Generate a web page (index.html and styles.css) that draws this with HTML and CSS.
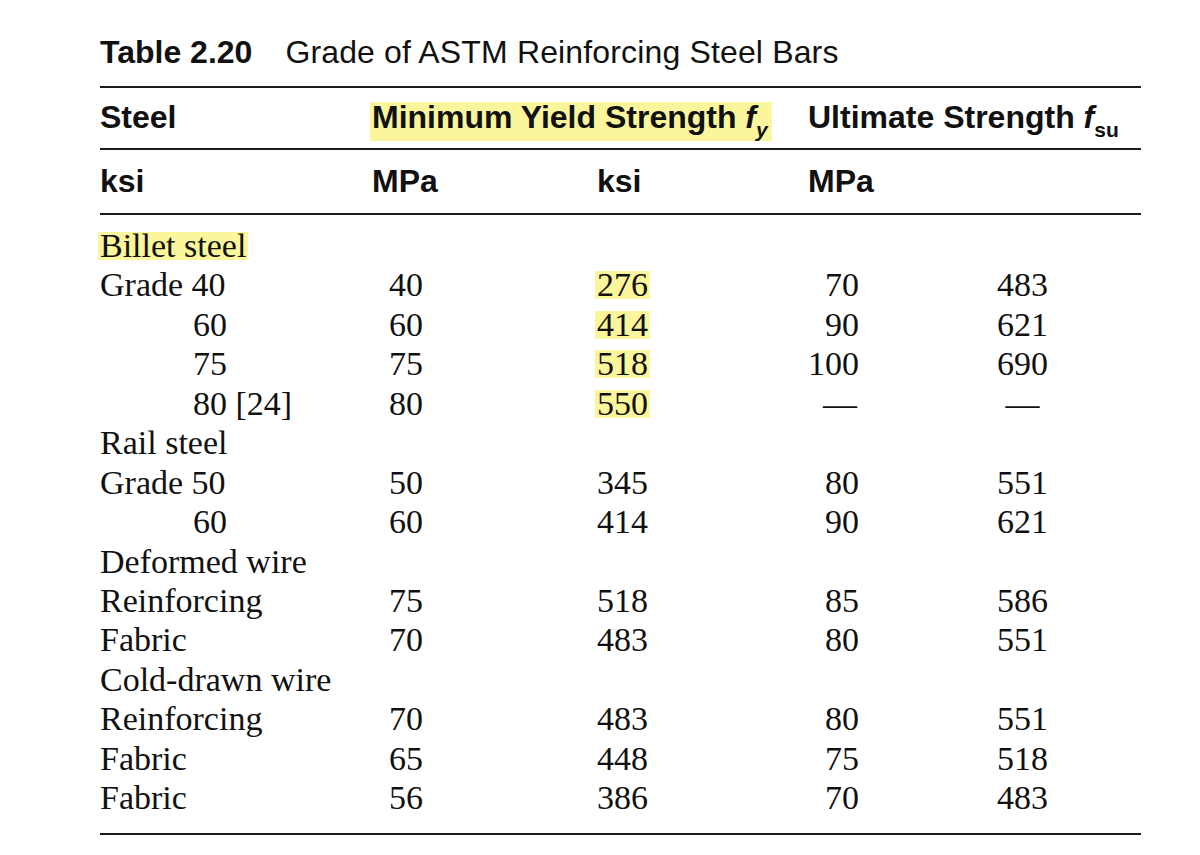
FILE: index.html
```html
<!DOCTYPE html>
<html lang="en">
<head>
<meta charset="utf-8">
<title>Table 2.20 Grade of ASTM Reinforcing Steel Bars</title>
<link rel="stylesheet" href="styles.css">
</head>
<body>
<main class="page">
  <h1 class="title"><span class="title-num">Table 2.20</span><span class="title-text">Grade of ASTM Reinforcing Steel Bars</span></h1>
  <div class="table">
    <div class="head head-1">
      <div>Steel</div>
      <div class="span2"><span class="mark-head">Minimum Yield Strength <span class="it">f</span><span class="sub it">y</span></span></div>
      <div class="span2">Ultimate Strength <span class="it">f</span><span class="sub">su</span></div>
    </div>
    <div class="head head-2">
      <div>ksi</div>
      <div>MPa</div>
      <div>ksi</div>
      <div>MPa</div>
    </div>
    <div class="body">
      <div class="row"><div class="name"><span class="hl">Billet steel</span></div></div>
      <div class="row"><div class="name">Grade 40</div><div class="num">40</div><div class="num"><span class="hl">276</span></div><div class="num">70</div><div class="num">483</div></div>
      <div class="row"><div class="name ind">60</div><div class="num">60</div><div class="num"><span class="hl">414</span></div><div class="num">90</div><div class="num">621</div></div>
      <div class="row"><div class="name ind">75</div><div class="num">75</div><div class="num"><span class="hl">518</span></div><div class="num">100</div><div class="num">690</div></div>
      <div class="row"><div class="name ind">80 [24]</div><div class="num">80</div><div class="num"><span class="hl">550</span></div><div class="num dash-r">—</div><div class="num dash-c">—</div></div>
      <div class="row"><div class="name">Rail steel</div></div>
      <div class="row"><div class="name">Grade 50</div><div class="num">50</div><div class="num">345</div><div class="num">80</div><div class="num">551</div></div>
      <div class="row"><div class="name ind">60</div><div class="num">60</div><div class="num">414</div><div class="num">90</div><div class="num">621</div></div>
      <div class="row"><div class="name">Deformed wire</div></div>
      <div class="row"><div class="name">Reinforcing</div><div class="num">75</div><div class="num">518</div><div class="num">85</div><div class="num">586</div></div>
      <div class="row"><div class="name">Fabric</div><div class="num">70</div><div class="num">483</div><div class="num">80</div><div class="num">551</div></div>
      <div class="row"><div class="name">Cold-drawn wire</div></div>
      <div class="row"><div class="name">Reinforcing</div><div class="num">70</div><div class="num">483</div><div class="num">80</div><div class="num">551</div></div>
      <div class="row"><div class="name">Fabric</div><div class="num">65</div><div class="num">448</div><div class="num">75</div><div class="num">518</div></div>
      <div class="row"><div class="name">Fabric</div><div class="num">56</div><div class="num">386</div><div class="num">70</div><div class="num">483</div></div>
    </div>
  </div>
</main>
</body>
</html>
```
FILE: styles.css
```css
html, body {
  margin: 0;
  padding: 0;
  background: #ffffff;
}

body {
  color: #111111;
}

.page {
  width: 1041px;
  margin-left: 100px;
  padding-top: 34px;
}

.title {
  margin: 0 0 16px;
  display: flex;
  gap: 33px;
  font-family: "Liberation Sans", Arial, sans-serif;
  font-size: 32px;
  line-height: 36px;
  font-weight: normal;
  color: #111111;
}

.title-num {
  font-weight: bold;
}

.title-text {
  letter-spacing: 0.15px;
}

.table {
  border-top: 2px solid #1c1c1c;
  border-bottom: 2px solid #1c1c1c;
}

.head,
.row {
  display: grid;
  grid-template-columns: 272px 225px 211px 189px 1fr;
}

.head {
  font-family: "Liberation Sans", Arial, sans-serif;
  font-weight: bold;
  font-size: 32px;
  line-height: 36px;
  height: 36px;
  border-bottom: 2px solid #1c1c1c;
  white-space: nowrap;
}

.head-1 {
  padding: 11px 0 13px;
}

.head-2 {
  padding: 13px 0 14px;
}

.span2 {
  grid-column: span 2;
}

.it {
  font-style: italic;
}

.sub {
  font-size: 21px;
  line-height: 0;
  vertical-align: -9px;
}

.mark-head {
  background: linear-gradient(to bottom, transparent 3px, #fbf69b 3px);
  padding: 0 4px 6px 2px;
  margin-left: -2px;
}

.body {
  font-family: "Liberation Serif", "Times New Roman", serif;
  font-size: 34px;
  line-height: 39.43px;
  padding: 11px 0 15px;
}

.name {
  white-space: nowrap;
}

.ind {
  padding-left: 93px;
}

.num {
  width: 51px;
  text-align: right;
  white-space: nowrap;
}

.dash-r {
  padding-right: 2px;
  box-sizing: border-box;
}

.dash-c {
  text-align: center;
}

.hl {
  background: linear-gradient(to bottom, transparent 5px, #fbf69b 5px, #fbf69b 33px, transparent 33px);
  padding: 0 2px;
  margin: 0 -2px;
}
```
